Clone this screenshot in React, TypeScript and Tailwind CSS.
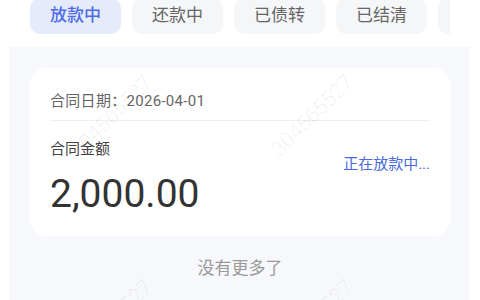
const tabs = ["放款中", "还款中", "已债转", "已结清", "已撤销"];

const marks = [
  "left-[112px] top-[117px]",
  "left-[313px] top-[116px]",
  "left-[112px] top-[321px]",
  "left-[313px] top-[321px]",
];

export default function App() {
  return (
    <div className="relative h-[300px] w-[480px] overflow-hidden bg-white font-['Roboto','Noto_Sans_CJK_SC',sans-serif]">
      {/* status tabs */}
      <div className="-mt-[2px] ml-[30px] flex w-[420px] gap-[11px] overflow-hidden">
        {tabs.map((tab, i) => (
          <div
            key={tab}
            className={
              i === 0
                ? "flex h-[36px] w-[91px] shrink-0 items-center justify-center rounded-[10px] bg-[#e6ebfc] text-[17px] font-medium text-[#4d6ce6]"
                : "flex h-[36px] w-[91px] shrink-0 items-center justify-center rounded-[10px] bg-[#f5f6f8] text-[17px] text-[#666666]"
            }
          >
            {tab}
          </div>
        ))}
      </div>

      {/* list */}
      <div className="ml-[9px] mr-[10px] mt-[13px] h-[260px] bg-[#f7f8fc] pl-[21px] pr-[20px] pt-[21px]">
        <div className="rounded-[16px] bg-white px-[20px] pb-[19px] pt-[23px]">
          <p className="text-[15px] leading-[20px] tracking-[0.3px] text-[#666666]">合同日期：2026-04-01</p>
          <div className="mt-[9px] border-t border-[#eeeeee]" />
          <div className="flex items-start justify-between">
            <div>
              <p className="mt-[18px] text-[15px] leading-[20px] text-[#444444]">合同金额</p>
              <p className="mt-[12px] text-[39px] leading-[46px] text-[#333333]">2,000.00</p>
            </div>
            <p className="mt-[33px] text-[15px] leading-[20px] text-[#4a6ae0]">正在放款中...</p>
          </div>
        </div>
        <p className="mt-[20px] text-center text-[17px] leading-[24px] text-[#999999]">没有更多了</p>
      </div>

      {/* watermark */}
      <div className="pointer-events-none absolute inset-0">
        {marks.map((pos) => (
          <div key={pos} className={`absolute h-0 w-0 ${pos}`}>
            <span className="absolute left-0 top-0 -translate-x-1/2 -translate-y-1/2 -rotate-45 whitespace-nowrap text-[21px] font-light text-black/[0.07]">
              304565527
            </span>
          </div>
        ))}
      </div>
    </div>
  );
}
